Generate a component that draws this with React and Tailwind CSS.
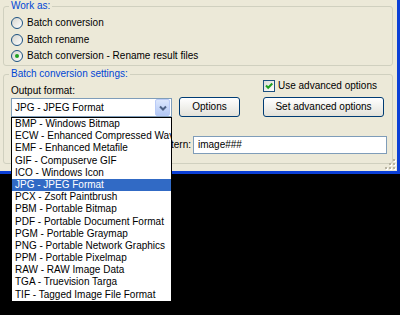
const formats = [
  "BMP - Windows Bitmap",
  "ECW - Enhanced Compressed Wavelet",
  "EMF - Enhanced Metafile",
  "GIF - Compuserve GIF",
  "ICO - Windows Icon",
  "JPG - JPEG Format",
  "PCX - Zsoft Paintbrush",
  "PBM - Portable Bitmap",
  "PDF - Portable Document Format",
  "PGM - Portable Graymap",
  "PNG - Portable Network Graphics",
  "PPM - Portable Pixelmap",
  "RAW - RAW Image Data",
  "TGA - Truevision Targa",
  "TIF - Tagged Image File Format",
];

function Radio({ checked, label }) {
  return (
    <div className="flex items-center h-[16.5px] gap-[4px]">
      <span className="w-[12px] h-[12px] rounded-full border border-[#1c5180] bg-linear-to-br from-[#d6d5ce] to-white flex items-center justify-center">
        {checked && <span className="w-[4px] h-[4px] rounded-full bg-[#21a121]" />}
      </span>
      <span>{label}</span>
    </div>
  );
}

function Button({ children, className }) {
  return (
    <div
      className={`h-[20px] border border-[#003c74] rounded-[3px] bg-linear-to-b from-white to-[#e3e2da] flex items-center justify-center ${className}`}
    >
      {children}
    </div>
  );
}

export default function App() {
  return (
    <div className="w-[400px] h-[315px] bg-black relative overflow-hidden font-['Liberation_Sans',Arial,sans-serif] text-[10px] leading-[12px] text-black">
      {/* Window */}
      <div className="relative h-[174px] bg-[#ece9d8] border-r-[3px] border-b-[3px] border-[#0b3fd6]">
        {/* Work as */}
        <fieldset className="ml-[3px] w-[390px] h-[66px] border border-[#d0d0bf] rounded-[3px]">
          <legend className="ml-[5px] px-[2px] text-[#0046d5]">Work as:</legend>
          <div className="pl-[7px] pt-[2.75px]">
            <Radio label="Batch conversion" />
            <Radio label="Batch rename" />
            <Radio checked label="Batch conversion - Rename result files" />
          </div>
        </fieldset>

        {/* Settings */}
        <fieldset className="mt-[2px] ml-[3px] w-[390px] border border-[#d0d0bf] rounded-[3px] pb-[9px]">
          <legend className="ml-[5px] px-[2px] text-[#0046d5]">Batch conversion settings:</legend>
          <div className="flex items-end pl-[7px]">
            <div className="w-[161px] flex flex-col">
              <span>Output format:</span>
              <div className="mt-[1.5px] h-[19px] border border-[#7f9db9] bg-white flex items-center">
                <span className="flex-1 pl-[3px]">JPG - JPEG Format</span>
                <span className="w-[15px] h-[17px] mr-[1px] rounded-[2px] border border-[#b9cbf7] bg-linear-to-b from-[#dce7fd] to-[#b3c8f5] flex items-center justify-center">
                  <svg width="8" height="6" viewBox="0 0 8 6">
                    <path d="M1 1.5 L4 4.5 L7 1.5" fill="none" stroke="#4d6185" strokeWidth="2" />
                  </svg>
                </span>
              </div>
            </div>
            <Button className="ml-[7px] w-[61px]">Options</Button>
            <div className="ml-[23px] w-[121px] flex flex-col">
              <div className="h-[12px] flex items-center gap-[3px]">
                <span className="w-[12px] h-[12px] border border-[#1c5180] bg-linear-to-br from-[#dcdcd7] to-white flex items-center justify-center">
                  <svg width="10" height="10" viewBox="0 0 10 10">
                    <path d="M2 4.5 L4.2 6.8 L8.3 2.5" fill="none" stroke="#21a121" strokeWidth="2" />
                  </svg>
                </span>
                <span>Use advanced options</span>
              </div>
              <Button className="mt-[5px]">Set advanced options</Button>
            </div>
          </div>
          <div className="mt-[19px] flex justify-end items-center pr-[5px] gap-[2px]">
            <span>Rename pattern:</span>
            <div className="w-[194px] h-[18px] border border-[#7f9db9] bg-white flex items-center pl-[4px]">
              image###
            </div>
          </div>
        </fieldset>

        {/* Size grip */}
        <svg className="absolute right-[1px] bottom-[1px]" width="12" height="12" viewBox="0 0 12 12">
          {[
            [9, 1],
            [9, 5],
            [5, 5],
            [9, 9],
            [5, 9],
            [1, 9],
          ].map(([x, y], i) => (
            <g key={i}>
              <rect x={x + 1} y={y + 1} width="2" height="2" fill="#ffffff" />
              <rect x={x} y={y} width="2" height="2" fill="#b8b4a2" />
            </g>
          ))}
        </svg>
      </div>

      {/* Open dropdown list */}
      <div className="absolute left-[11px] top-[117px] w-[161px] border border-black bg-white">
        {formats.map((f) => (
          <div
            key={f}
            className={`h-[12.2px] leading-[12.2px] px-[3px] whitespace-nowrap overflow-hidden ${
              f.startsWith("JPG") ? "bg-[#316ac5] text-white" : ""
            }`}
          >
            {f}
          </div>
        ))}
      </div>
    </div>
  );
}
